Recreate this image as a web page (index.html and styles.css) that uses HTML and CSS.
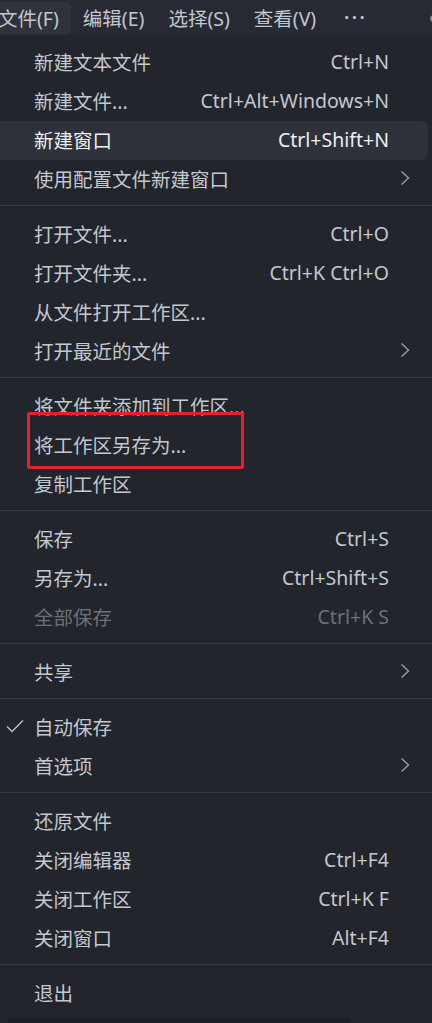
FILE: index.html
```html
<!DOCTYPE html>
<html lang="zh-CN">
<head>
  <meta charset="UTF-8" />
  <title>文件菜单</title>
  <link rel="stylesheet" href="styles.css">
</head>
<body>
  <div class="titlebar">
    <span class="tab tab-first active">文件(F)</span>
    <span class="tab">编辑(E)</span>
    <span class="tab">选择(S)</span>
    <span class="tab">查看(V)</span>
    <span class="tab more">···</span>
    <span class="edge-dot"></span>
  </div>

  <div class="menu">
    <div class="row"><span class="check"></span><span class="label">新建文本文件</span><span class="key">Ctrl+N</span><span class="arrow"></span></div>
    <div class="row"><span class="check"></span><span class="label">新建文件...</span><span class="key">Ctrl+Alt+Windows+N</span><span class="arrow"></span></div>
    <div class="row hover"><span class="check"></span><span class="label">新建窗口</span><span class="key">Ctrl+Shift+N</span><span class="arrow"></span></div>
    <div class="row"><span class="check"></span><span class="label">使用配置文件新建窗口</span><span class="key"></span><span class="arrow"><svg width="10" height="16" viewBox="0 0 10 16"><polyline points="1.5,1.5 8.5,8 1.5,14.5" /></svg></span></div>
    <div class="sep"></div>

    <div class="row"><span class="check"></span><span class="label">打开文件...</span><span class="key">Ctrl+O</span><span class="arrow"></span></div>
    <div class="row"><span class="check"></span><span class="label">打开文件夹...</span><span class="key">Ctrl+K Ctrl+O</span><span class="arrow"></span></div>
    <div class="row"><span class="check"></span><span class="label">从文件打开工作区...</span><span class="key"></span><span class="arrow"></span></div>
    <div class="row"><span class="check"></span><span class="label">打开最近的文件</span><span class="key"></span><span class="arrow"><svg width="10" height="16" viewBox="0 0 10 16"><polyline points="1.5,1.5 8.5,8 1.5,14.5" /></svg></span></div>
    <div class="sep"></div>

    <div class="row"><span class="check"></span><span class="label">将文件夹添加到工作区...</span><span class="key"></span><span class="arrow"></span></div>
    <div class="row"><span class="check"></span><span class="label">将工作区另存为...</span><span class="key"></span><span class="arrow"></span></div>
    <div class="row"><span class="check"></span><span class="label">复制工作区</span><span class="key"></span><span class="arrow"></span></div>
    <div class="sep"></div>

    <div class="row"><span class="check"></span><span class="label">保存</span><span class="key">Ctrl+S</span><span class="arrow"></span></div>
    <div class="row"><span class="check"></span><span class="label">另存为...</span><span class="key">Ctrl+Shift+S</span><span class="arrow"></span></div>
    <div class="row disabled"><span class="check"></span><span class="label">全部保存</span><span class="key">Ctrl+K S</span><span class="arrow"></span></div>
    <div class="sep"></div>

    <div class="row"><span class="check"></span><span class="label">共享</span><span class="key"></span><span class="arrow"><svg width="10" height="16" viewBox="0 0 10 16"><polyline points="1.5,1.5 8.5,8 1.5,14.5" /></svg></span></div>
    <div class="sep"></div>

    <div class="row"><span class="check"><svg width="18" height="14" viewBox="0 0 18 14"><polyline points="1,7.5 6,12.5 17,1.5" /></svg></span><span class="label">自动保存</span><span class="key"></span><span class="arrow"></span></div>
    <div class="row"><span class="check"></span><span class="label">首选项</span><span class="key"></span><span class="arrow"><svg width="10" height="16" viewBox="0 0 10 16"><polyline points="1.5,1.5 8.5,8 1.5,14.5" /></svg></span></div>
    <div class="sep"></div>

    <div class="row"><span class="check"></span><span class="label">还原文件</span><span class="key"></span><span class="arrow"></span></div>
    <div class="row"><span class="check"></span><span class="label">关闭编辑器</span><span class="key">Ctrl+F4</span><span class="arrow"></span></div>
    <div class="row"><span class="check"></span><span class="label">关闭工作区</span><span class="key">Ctrl+K F</span><span class="arrow"></span></div>
    <div class="row"><span class="check"></span><span class="label">关闭窗口</span><span class="key">Alt+F4</span><span class="arrow"></span></div>
    <div class="sep"></div>

    <div class="row"><span class="check"></span><span class="label">退出</span><span class="key"></span><span class="arrow"></span></div>
    <div class="scrollbar"></div>
  </div>

  <div class="mark"></div>
</body>
</html>
```

FILE: styles.css
```css
body {
  margin: 0;
  padding: 0;
  background-color: #22252c;
  font-family: "Noto Sans", "Noto Sans CJK SC", sans-serif;
  font-size: 19.5px;
  color: #c3c7cf;
  overflow: hidden;
}

.titlebar {
  display: flex;
  align-items: center;
  height: 36px;
  background-color: #272a32;
  position: relative;
  white-space: nowrap;
}

.tab {
  display: flex;
  align-items: center;
  height: 32px;
  padding: 0 12px 2px 12px;
  box-sizing: border-box;
  border-radius: 6px;
  color: #c3c7cf;
}

.tab-first {
  margin-left: -14px;
}

.tab.active {
  background-color: #30333b;
}

.tab.more {
  padding-left: 16px;
  letter-spacing: 3px;
  font-size: 17px;
  font-weight: bold;
}

.edge-dot {
  position: absolute;
  right: -5px;
  top: 15px;
  width: 7px;
  height: 7px;
  border-radius: 50%;
  background-color: #7a8aa6;
}

.menu {
  padding: 6.5px 4px 0 0;
}

.row {
  display: flex;
  align-items: center;
  height: 39px;
  padding-bottom: 2px;
  box-sizing: border-box;
  border-radius: 0 6px 6px 0;
  white-space: nowrap;
}

.row.hover {
  background-color: #2e3139;
  color: #eceef2;
}

.row.disabled {
  color: #6d7078;
}

.check {
  width: 34px;
  flex: none;
  display: flex;
  justify-content: center;
  padding-right: 5px;
  box-sizing: border-box;
}

.check svg polyline {
  fill: none;
  stroke: #b9bdc5;
  stroke-width: 1.5;
}

.label {
  flex: 1;
}

.key {
  flex: none;
}

.arrow {
  width: 39px;
  flex: none;
  display: flex;
  padding-left: 11px;
  box-sizing: border-box;
}

.arrow svg polyline {
  fill: none;
  stroke: #9a9ea6;
  stroke-width: 1.4;
}

.sep {
  height: 1px;
  margin: 6.5px 0 8.5px 0;
  background-color: #373a42;
  margin-right: -4px;
}

.scrollbar {
  height: 8px;
  width: 342px;
  margin: 5px 0 0 8px;
  background-color: #1b1e23;
}

.mark {
  position: absolute;
  left: 27px;
  top: 412px;
  width: 211px;
  height: 51px;
  border: 3px solid #e5222b;
  border-radius: 2px;
}
```
